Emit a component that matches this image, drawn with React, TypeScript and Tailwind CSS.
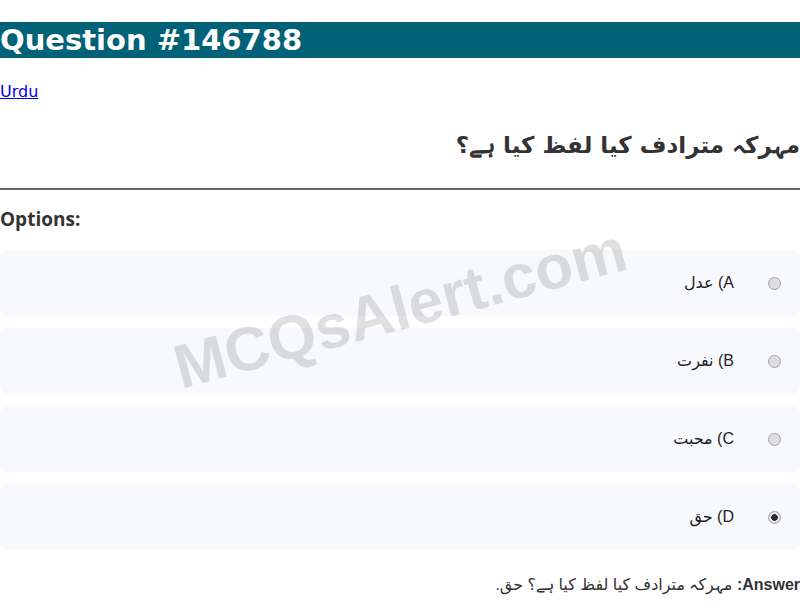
const question = "م\u06C1رک\u06C1 مترادف کیا لفظ کیا \u06C1\u06D2؟";

const options = [
  { key: "A", text: "عدل", checked: false },
  { key: "B", text: "نفرت", checked: false },
  { key: "C", text: "محبت", checked: false },
  { key: "D", text: "حق", checked: true },
];

const App = () => {
  return (
    <div className="relative min-h-[609px] overflow-hidden bg-white pt-[22px] font-['DejaVu_Sans',sans-serif] text-[#333]">
      <h1 className="h-[36px] bg-[#016177] text-[29px] font-bold leading-[37px] text-white">
        Question #146788
      </h1>

      <a href="#" className="mt-[24px] block w-fit text-[16px] leading-[19px] text-[#0000ee] underline">
        Urdu
      </a>

      <h2 dir="rtl" className="mt-[28px] text-[23px] font-bold leading-[32px] text-[#333]">
        {question}
      </h2>

      <hr className="mt-[27px] border-t-2 border-[#666]" />

      <div className="mt-[17px] font-['Open_Sans',sans-serif] text-[19px] font-bold leading-[24px]">Options:</div>

      <div className="mt-[19px] flex flex-col gap-[12px]">
        {options.map((o) => (
          <div
            key={o.key}
            dir="rtl"
            className="flex h-[66px] items-center rounded-lg bg-[#f8f9fc] pr-[19px]"
          >
            <label className="flex items-center gap-[34px] font-['Liberation_Sans','DejaVu_Sans',sans-serif] text-[16px] text-[#222]">
              <input
                type="radio"
                name="opt"
                disabled
                defaultChecked={o.checked}
                className="m-0 h-[13px] w-[13px] appearance-none rounded-full border border-[#a3a3a3] bg-[#dedede] checked:bg-[radial-gradient(circle,#2b2b2b_0_3px,#e4e4e4_3.6px)]"
              />
              <span>{o.key}) {o.text}</span>
            </label>
          </div>
        ))}
      </div>

      <p dir="rtl" className="mt-[25px] font-['Liberation_Sans','DejaVu_Sans',sans-serif] text-[16px] leading-[20px]">
        <strong>Answer:</strong> {question} حق.
      </p>

      {/* watermark */}
      <div className="pointer-events-none absolute left-[400px] top-[308px] -translate-x-1/2 -translate-y-1/2 -rotate-[15deg] whitespace-nowrap font-['Liberation_Sans',sans-serif] text-[62px] font-bold text-[#000]/[0.12]">
        MCQsAlert.com
      </div>
    </div>
  );
};

export default App;
